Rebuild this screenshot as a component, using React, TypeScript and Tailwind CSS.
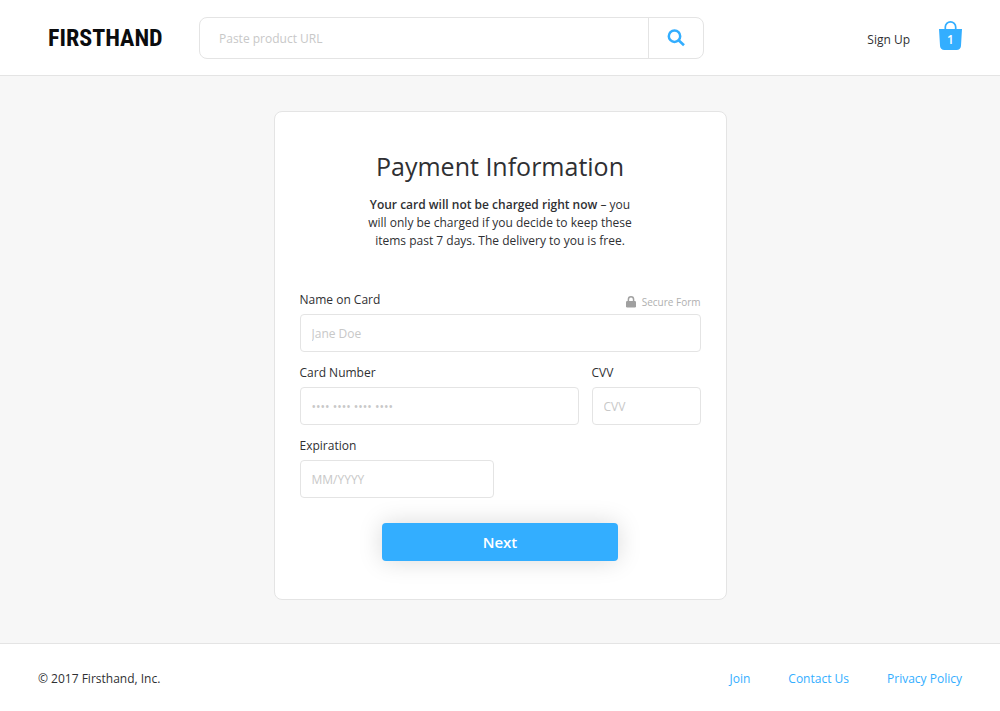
import React from "react";

type FieldProps = {
  id: string;
  label: string;
  placeholder: string;
  className?: string;
  note?: React.ReactNode;
};

function Field({ id, label, placeholder, className = "", note }: FieldProps) {
  return (
    <div className={className}>
      <div className="flex items-center justify-between">
        <label htmlFor={id} className="leading-[18px]">
          {label}
        </label>
        {note}
      </div>
      <input
        id={id}
        type="text"
        placeholder={placeholder}
        className="mt-[5px] block h-[38px] w-full rounded border border-[#e4e4e4] bg-white px-[11px] outline-none placeholder:text-[#c8c8c8] focus:border-[#33aeff]"
      />
    </div>
  );
}

function SearchIcon() {
  return (
    <svg viewBox="0 0 18 18" className="size-[18px]" fill="none" stroke="#33aeff" aria-hidden="true">
      <circle cx="7.5" cy="7.2" r="5.7" strokeWidth="2.5" />
      <path d="M11.6 11.3 17 16.3" strokeWidth="2.6" />
    </svg>
  );
}

function LockIcon() {
  return (
    <svg viewBox="0 0 10 12" className="h-3 w-[10px]" aria-hidden="true">
      <path d="M2.4 6V3.4a2.6 2.6 0 0 1 5.2 0V6" fill="none" stroke="#a0a0a0" strokeWidth="1.5" />
      <rect x="0" y="5" width="10" height="6.5" rx="1.2" fill="#a0a0a0" />
    </svg>
  );
}

function BagIcon() {
  return (
    <svg viewBox="0 0 24 30" className="h-[30px] w-6" aria-hidden="true">
      <path d="M6.3 9V6.1a5.2 5.2 0 0 1 10.4 0V9" fill="none" stroke="#33aeff" strokeWidth="1.7" />
      <path d="M0 8h23l-1 16.4a4.4 4.4 0 0 1-4.4 4.6H5.4A4.4 4.4 0 0 1 1 24.4Z" fill="#33aeff" />
    </svg>
  );
}

export default function App() {
  return (
    <div className="flex min-h-screen flex-col bg-[#f7f7f7] font-['Open_Sans',sans-serif] text-[12px] text-[#2f3033]">
      <header className="flex h-[76px] items-center border-b border-[#e4e4e4] bg-white pr-[37px] pl-12">
        <a href="#" className="w-[151px] shrink-0 font-['Roboto_Condensed','Liberation_Sans_Narrow',sans-serif] text-[24px] leading-none font-bold text-[#0b0c0e]">
          FIRSTHAND
        </a>
        <form className="flex h-[42px] w-full max-w-[505px] rounded-lg border border-[#e4e4e4]" onSubmit={(e) => e.preventDefault()}>
          <input
            type="text"
            aria-label="Product URL"
            placeholder="Paste product URL"
            className="min-w-0 flex-1 bg-transparent px-[19px] pt-[2px] outline-none placeholder:text-[#c8c8c8]"
          />
          <button type="submit" aria-label="Search" className="flex w-[55px] items-center justify-center border-l border-[#e4e4e4]">
            <SearchIcon />
          </button>
        </form>
        <nav className="ml-auto flex shrink-0 items-center gap-[29px]">
          <a href="#" className="pt-1">Sign Up</a>
          <a href="#" aria-label="Cart, 1 item" className="relative mb-1 block">
            <BagIcon />
            <span className="absolute top-[11px] left-0 w-[23px] text-center leading-4 font-semibold text-white">1</span>
          </a>
        </nav>
      </header>

      <main className="flex flex-1 flex-col items-center px-4 pt-[35px] pb-[43px]">
        <section className="w-full max-w-[453px] rounded-lg border border-[#e4e4e4] bg-white px-[25px] pt-9 pb-[38px]">
          <h1 className="text-center text-[25px] leading-9">Payment Information</h1>
          <p className="mx-auto mt-3 max-w-[300px] text-center leading-[18px]">
            <strong className="font-semibold">Your card will not be charged right now</strong> – you
            <br />
            will only be charged if you decide to keep these
            <br />
            items past 7 days. The delivery to you is free.
          </p>

          <form className="mt-[41px] flex flex-col gap-3" onSubmit={(e) => e.preventDefault()}>
            <Field
              id="name"
              label="Name on Card"
              placeholder="Jane Doe"
              note={
                <span className="flex items-center gap-[6px] pt-1 text-[10px] leading-[14px] text-[#b0b0b0]">
                  <LockIcon />
                  Secure Form
                </span>
              }
            />
            <div className="flex gap-[13px]">
              <Field id="number" label="Card Number" placeholder="•••• •••• •••• ••••" className="flex-1" />
              <Field id="cvv" label="CVV" placeholder="CVV" className="w-[109px]" />
            </div>
            <Field id="expiration" label="Expiration" placeholder="MM/YYYY" className="w-[194px]" />
            <button
              type="submit"
              className="mx-auto mt-[13px] h-[38px] w-[236px] rounded bg-[#33aeff] text-[15px] font-semibold text-white shadow-[0_0_25px_rgba(0,0,0,0.15)]"
            >
              Next
            </button>
          </form>
        </section>
      </main>

      <footer className="flex h-[68px] items-center justify-between border-t border-[#e4e4e4] bg-white px-[38px] pt-[2px]">
        <p>© 2017 Firsthand, Inc.</p>
        <nav className="flex gap-[38px] text-[#33aeff]">
          <a href="#">Join</a>
          <a href="#">Contact Us</a>
          <a href="#">Privacy Policy</a>
        </nav>
      </footer>
    </div>
  );
}
